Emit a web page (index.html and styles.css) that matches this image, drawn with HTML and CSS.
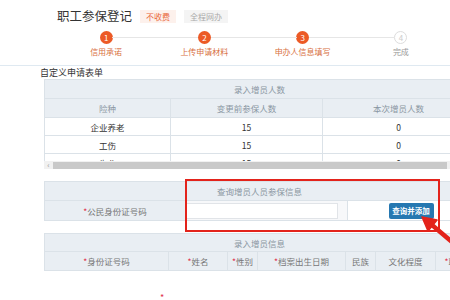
FILE: index.html
```html
<!DOCTYPE html>
<html lang="zh-CN">
<head>
<meta charset="utf-8">
<title>职工参保登记</title>
<link rel="stylesheet" href="styles.css">
</head>
<body>
<div class="page">
  <div class="head">
    <h1 class="title">职工参保登记</h1>
    <span class="tag tag-fee">不收费</span>
    <span class="tag tag-online">全程网办</span>
  </div>
  <ol class="steps">
    <li class="step done"><span class="dot">1</span><span class="label">信用承诺</span></li>
    <li class="step done"><span class="dot">2</span><span class="label">上传申请材料</span></li>
    <li class="step done"><span class="dot">3</span><span class="label">申办人信息填写</span></li>
    <li class="step todo"><span class="dot">4</span><span class="label">完成</span></li>
  </ol>

  <div class="section-title">自定义申请表单</div>

  <div class="block">
    <div class="clip">
      <table class="grid g1">
        <colgroup><col class="c126"><col class="c152"><col class="c152"></colgroup>
        <tr class="h19"><th colspan="3">录入增员人数</th></tr>
        <tr class="h19"><th>险种</th><th>变更前参保人数</th><th>本次增员人数</th></tr>
        <tr class="h18"><td>企业养老</td><td>15</td><td>0</td></tr>
        <tr class="h18"><td>工伤</td><td>15</td><td>0</td></tr>
        <tr class="h18"><td>失业</td><td>15</td><td>0</td></tr>
      </table>
    </div>
    <div class="scrollbar"><span class="sb-arrow">&#8249;</span><span class="sb-thumb"></span></div>
  </div>

  <div class="block query">
    <table class="grid g2">
      <colgroup><col class="c141"><col class="c162"><col class="c127"></colgroup>
      <tr class="h19"><th colspan="3">查询增员人员参保信息</th></tr>
      <tr class="h20">
        <th class="lbl"><span class="req">*</span>公民身份证号码</th>
        <td class="inp-cell"><span class="inp"></span></td>
        <td class="btn-cell"><button class="btn">查询并添加</button></td>
      </tr>
    </table>
    <div class="highlight"></div>
  </div>

  <div class="block">
    <table class="grid g3">
      <colgroup><col class="c124"><col class="c59"><col class="c30"><col class="c88"><col class="c30"><col class="c60"><col class="c39"></colgroup>
      <tr class="h18"><th colspan="7">录入增员信息</th></tr>
      <tr class="h19">
        <th class="lbl"><span class="req">*</span>身份证号码</th>
        <th class="lbl"><span class="req">*</span>姓名</th>
        <th class="lbl"><span class="req">*</span>性别</th>
        <th class="lbl"><span class="req">*</span>档案出生日期</th>
        <th class="lbl">民族</th>
        <th class="lbl">文化程度</th>
        <th class="lbl"><span class="req">*</span>职业</th>
      </tr>
    </table>
  </div>

  <div class="next-row"><span class="req">*</span></div>

  <svg class="pointer" width="40" height="36" viewBox="0 0 40 36">
    <line x1="16" y1="15" x2="42" y2="37" stroke="#e3231b" stroke-width="4.5" stroke-linecap="round"/>
    <polygon points="6,7 21,10 12,21" fill="#e3231b" stroke="#e3231b" stroke-width="1.5" stroke-linejoin="round"/>
  </svg>
</div>
</body>
</html>
```

FILE: styles.css
```css
html, body {
  margin: 0;
  padding: 0;
  overflow: hidden;
  background: #fff;
}
body {
  font-family: "Noto Sans CJK SC", "Noto Sans", sans-serif;
  color: #333;
}
.page {
  position: relative;
  width: 450px;
  height: 300px;
}
.head {
  display: flex;
  align-items: center;
  height: 20px;
  padding: 6px 0 0 57px;
}
.title {
  margin: 0;
  font-size: 12.5px;
  font-weight: normal;
  line-height: 20px;
  color: #333;
}
.tag {
  font-size: 8px;
  line-height: 13px;
  height: 13px;
  padding: 0 6px;
}
.tag-fee {
  margin-left: 8px;
  background: #fdf1ec;
  color: #e9673d;
}
.tag-online {
  margin-left: 8px;
  background: #f4f4f4;
  color: #aaa;
}
.steps {
  list-style: none;
  margin: 0;
  padding: 5px 0 8px 57px;
  display: flex;
  border-bottom: 1px solid #dfe9f1;
}
.step {
  position: relative;
  width: 101px;
  display: flex;
  flex-direction: column;
  align-items: center;
  gap: 3px;
}
.step + .step::before {
  content: "";
  position: absolute;
  top: 6px;
  left: -43px;
  width: 86px;
  height: 1px;
  background: #e6e6e6;
}
.dot {
  width: 13px;
  height: 13px;
  border-radius: 50%;
  font-size: 8px;
  line-height: 13px;
  text-align: center;
  box-sizing: border-box;
}
.done .dot {
  background: #ec5a26;
  color: #fff;
}
.todo .dot {
  background: #fff;
  border: 1px solid #ddd;
  color: #ccc;
  line-height: 11px;
}
.label {
  font-size: 8px;
  line-height: 10px;
  white-space: nowrap;
}
.done .label { color: #d8703f; }
.todo .label { color: #999; }

.section-title {
  margin-top: 1px;
  padding-left: 40px;
  font-size: 9px;
  line-height: 12px;
  color: #333;
}
.block {
  margin-left: 44px;
}
.clip {
  height: 82px;
  overflow: hidden;
}
.grid {
  width: 430px;
  table-layout: fixed;
  border-collapse: collapse;
  font-size: 8.5px;
}
.grid th, .grid td {
  border: 1px solid #dbe2e8;
  padding: 0;
  text-align: center;
  white-space: nowrap;
  overflow: hidden;
}
.grid th {
  background: #e9eef3;
  color: #8a96a2;
  font-weight: normal;
}
.grid td {
  background: #fff;
  color: #333;
}
.h18 { height: 18px; }
.h19 { height: 19px; }
.h20 { height: 20px; }
.c126 { width: 126px; }
.c152 { width: 152px; }
.c141 { width: 141px; }
.c162 { width: 162px; }
.c127 { width: 127px; }
.c124 { width: 124px; }
.c59 { width: 59px; }
.c30 { width: 30px; }
.c88 { width: 88px; }
.c60 { width: 60px; }
.c39 { width: 39px; }

.scrollbar {
  display: flex;
  align-items: center;
  height: 8px;
  width: 406px;
  background: #f1f1f1;
}
.sb-arrow {
  width: 9px;
  font-size: 8px;
  line-height: 8px;
  color: #999;
  text-align: center;
}
.sb-thumb {
  width: 394px;
  height: 7px;
  background: #c9c9c9;
}

.query {
  position: relative;
  margin-top: 11px;
}
.grid .lbl {
  color: #777;
}
.req {
  color: #e0314b;
}
.inp-cell {
  padding: 0 0 0 8px;
}
.grid td.inp-cell {
  background: #f7f8fa;
}
.inp {
  display: block;
  width: 152px;
  height: 16px;
  background: #fff;
  border: 1px solid #e1e4e8;
  box-sizing: border-box;
}
.btn {
  display: inline-block;
  width: 45px;
  height: 16px;
  padding: 0;
  border: none;
  border-radius: 2px;
  background: #2678b1;
  color: #fff;
  font-family: inherit;
  font-size: 7.5px;
  font-weight: bold;
  line-height: 16px;
}
.highlight {
  position: absolute;
  left: 141px;
  top: -2px;
  width: 255px;
  height: 53px;
  border: 2.5px solid #e3231b;
  box-sizing: border-box;
}
.block + .block { margin-top: 12px; }
.g3 .lbl { color: #777; }

.next-row {
  padding-left: 160px;
  margin-top: 22px;
  font-size: 9px;
  line-height: 10px;
}
.pointer {
  position: absolute;
  left: 416px;
  top: 210px;
}
```
